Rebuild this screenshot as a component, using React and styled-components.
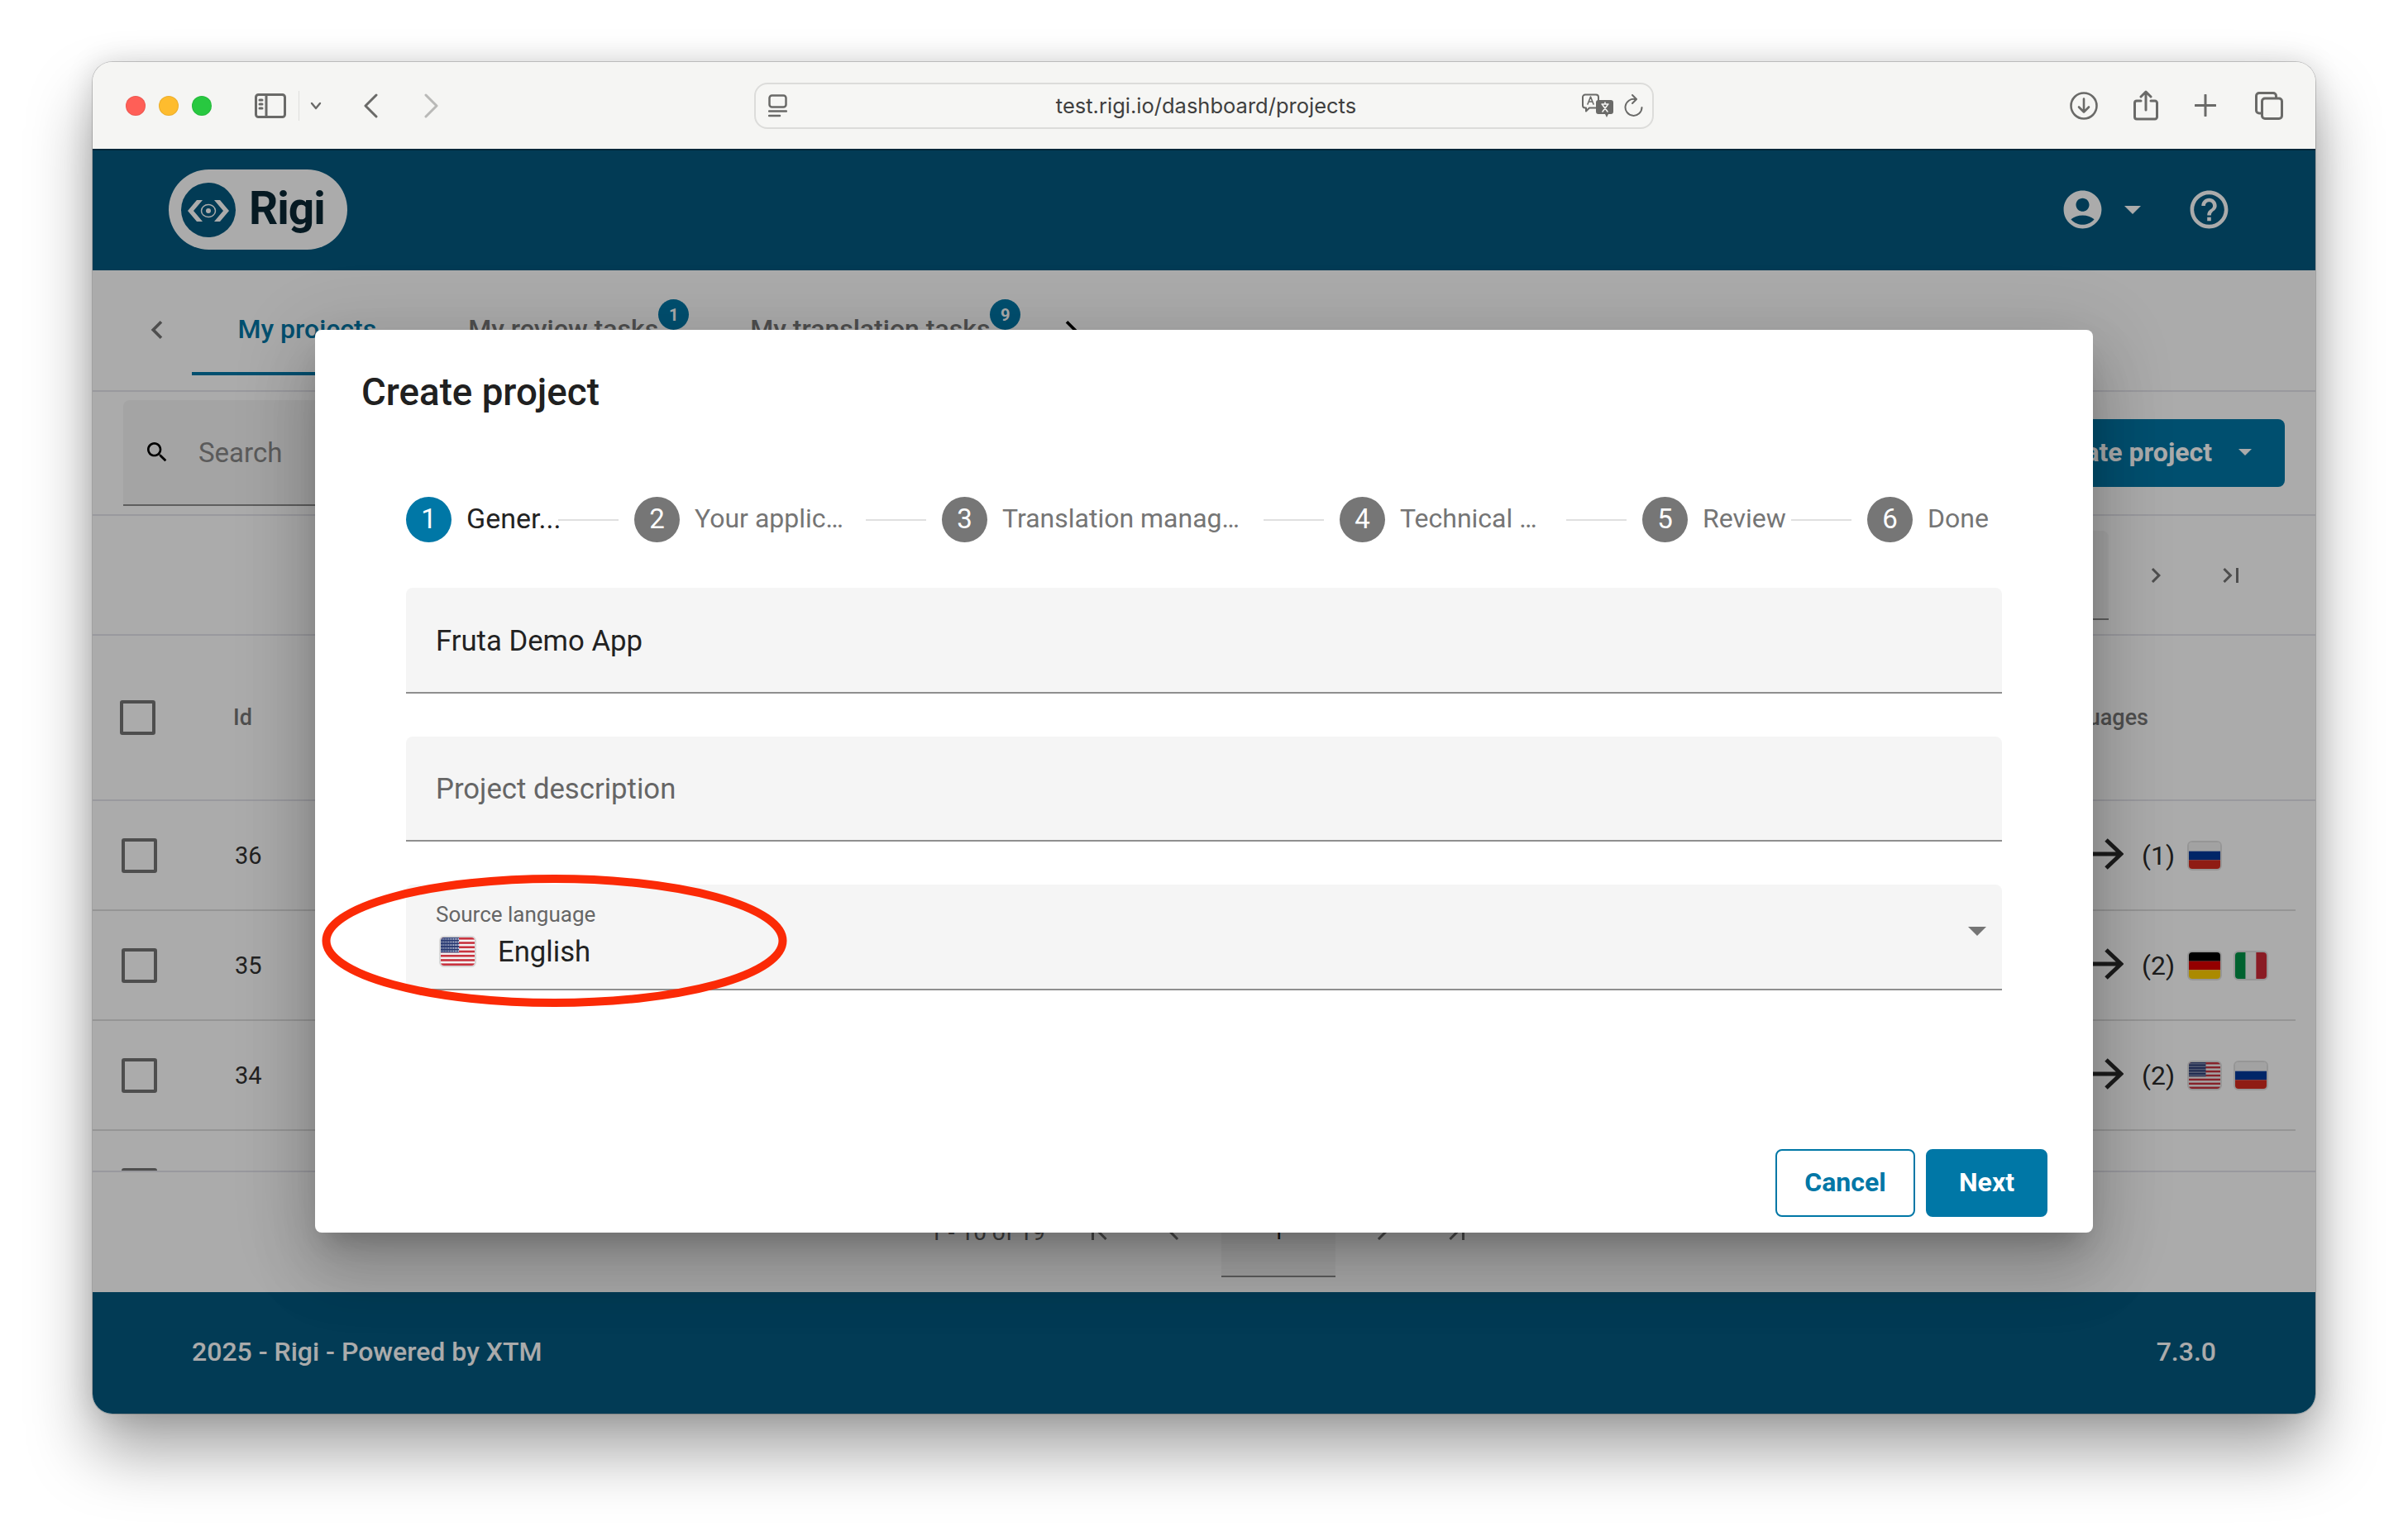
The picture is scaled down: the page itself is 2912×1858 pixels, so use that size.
import React from 'react';
import styled, { createGlobalStyle } from 'styled-components';

const PRIMARY = '#0077a6';

const GlobalStyle = createGlobalStyle`
  * {
    box-sizing: border-box;
  }

  html,
  body {
    margin: 0;
    background: #fff;
    font-family: Roboto, 'Liberation Sans', sans-serif;
  }
`;

const Stage = styled.div`
  width: 2912px;
  height: 1858px;
  padding: 75px 112px 0;
  overflow: hidden;
`;

const BrowserWindow = styled.div`
  width: 2688px;
  height: 1635px;
  display: flex;
  flex-direction: column;
  border-radius: 24px;
  overflow: hidden;
  box-shadow: 0 0 0 1px rgba(0, 0, 0, 0.18), 0 46px 78px rgba(0, 0, 0, 0.36), 0 0 34px rgba(0, 0, 0, 0.14);
`;

/* browser chrome */

const TitleBar = styled.div`
  height: 105px;
  flex: none;
  display: grid;
  grid-template-columns: 800px 1088px 1fr;
  align-items: center;
  background: #f5f5f3;
`;

const ChromeLeft = styled.div`
  display: flex;
  align-items: center;
  padding-left: 40px;
`;

const Light = styled.span`
  width: 24px;
  height: 24px;
  margin-right: 16px;
  border-radius: 50%;
  background: ${(p) => p.$color};
  box-shadow: inset 0 0 0 1px rgba(0, 0, 0, 0.08);
`;

const ChromeIcon = styled.svg`
  display: block;
  flex: none;
  fill: none;
  stroke: ${(p) => p.$stroke || '#6a6a68'};
  stroke-width: ${(p) => p.$weight || 3};
  stroke-linecap: round;
  stroke-linejoin: round;
  margin-left: ${(p) => p.$ml || 0}px;
`;

const ChromeDivider = styled.span`
  width: 1px;
  height: 36px;
  margin-left: 15px;
  background: #dededc;
`;

const UrlBar = styled.div`
  height: 56px;
  display: flex;
  align-items: center;
  padding: 0 11px 0 15px;
  border: 2px solid #dcdcda;
  border-radius: 16px;
  background: #f6f6f4;
`;

const UrlText = styled.span`
  flex: 1;
  padding-left: 52px;
  text-align: center;
  font-family: Inter, Roboto, sans-serif;
  font-size: 25.5px;
  color: #3f3f3f;
`;

const ChromeRight = styled.div`
  display: flex;
  align-items: center;
  justify-content: flex-end;
  padding-right: 39px;
`;

/* app behind the dialog */

const AppArea = styled.div`
  position: relative;
  flex: 1;
  display: flex;
  flex-direction: column;
  background: #fff;
`;

const Backdrop = styled.div`
  position: absolute;
  inset: 0;
  background: rgba(0, 0, 0, 0.33);
`;

const Header = styled.header`
  height: 147px;
  flex: none;
  display: flex;
  align-items: center;
  padding: 0 101px 2px 92px;
  background: #03597f;
  border-top: 2px solid #013a55;
`;

const LogoPill = styled.div`
  width: 216px;
  height: 97px;
  display: flex;
  align-items: center;
  gap: 16px;
  padding-left: 15px;
  border-radius: 49px;
  background: #fff;
`;

const LogoMark = styled.svg`
  width: 66px;
  height: 66px;
  flex: none;
`;

const LogoWord = styled.span`
  margin-top: -3px;
  font-size: 55px;
  font-weight: 700;
  letter-spacing: -1px;
  color: #0a2835;
`;

const HeaderActions = styled.div`
  margin-left: auto;
  display: flex;
  align-items: center;
`;

const MaterialIcon = styled.svg`
  display: block;
  flex: none;
  fill: ${(p) => p.$fill || '#757575'};
  margin-left: ${(p) => p.$ml || 0}px;
`;

const Caret = styled.span`
  width: 0;
  height: 0;
  flex: none;
  border-left: ${(p) => p.$size}px solid transparent;
  border-right: ${(p) => p.$size}px solid transparent;
  border-top: ${(p) => p.$size}px solid ${(p) => p.$color};
  margin-left: ${(p) => p.$ml || 0}px;
`;

const Main = styled.main`
  flex: 1;
  display: flex;
  flex-direction: column;
  min-height: 0;
`;

const TabsRow = styled.div`
  height: 147px;
  flex: none;
  display: flex;
  padding: 14px 0 18px 36px;
  border-bottom: 2px solid #e4e4ec;
`;

const TabScroll = styled.div`
  width: 84px;
  display: flex;
  align-items: center;
  justify-content: center;
  padding-top: 3px;
`;

const Tab = styled.div`
  display: flex;
  align-items: center;
  padding: 5px 55.5px 0;
  font-size: 32px;
  font-weight: 500;
  color: ${(p) => (p.$active ? PRIMARY : '#757575')};
  border-bottom: 4px solid ${(p) => (p.$active ? PRIMARY : 'transparent')};
`;

const TabLabel = styled.span`
  position: relative;
`;

const TabBadge = styled.span`
  position: absolute;
  left: 100%;
  top: -17px;
  width: 37px;
  height: 37px;
  display: flex;
  align-items: center;
  justify-content: center;
  border-radius: 50%;
  background: ${PRIMARY};
  color: #fff;
  font-size: 20px;
  font-weight: 700;
`;

const Toolbar = styled.div`
  height: 150px;
  flex: none;
  display: flex;
  align-items: center;
  justify-content: space-between;
  padding: 0 37px;
  border-bottom: 2px solid #e4e4ec;
`;

const SearchField = styled.div`
  width: 560px;
  height: 128px;
  display: flex;
  align-items: center;
  gap: 34px;
  padding-left: 25px;
  background: #f5f5f5;
  border-bottom: 2px solid #8c8c8c;
  border-radius: 8px 8px 0 0;
  font-size: 33px;
  color: #888;
`;

const CreateButton = styled.div`
  width: 500px;
  height: 82px;
  display: flex;
  align-items: center;
  justify-content: flex-end;
  padding: 0 40px 2px 0;
  border-radius: 8px;
  background: ${PRIMARY};
  color: #fff;
  font-size: 32px;
  font-weight: 700;
`;

const PageRow = styled.div`
  height: 145px;
  flex: none;
  display: flex;
  align-items: center;
  justify-content: ${(p) => (p.$centered ? 'center' : 'flex-end')};
  padding: ${(p) => (p.$centered ? '0 0 0 20px' : '0 57px 0 0')};
  border-bottom: ${(p) => (p.$centered ? 'none' : '2px solid #e4e4ec')};
  font-size: 28px;
  color: #666;
`;

const PageLabel = styled.span`
  margin-right: 20px;
`;

const PageButton = styled.div`
  width: 91px;
  display: flex;
  justify-content: center;
`;

const PageField = styled.div`
  width: 138px;
  height: 108px;
  margin: 0 11px;
  display: flex;
  align-items: center;
  justify-content: center;
  background: #f5f5f5;
  border-bottom: 2px solid #8c8c8c;
  border-radius: 8px 8px 0 0;
  color: #222;
`;

const TableHead = styled.div`
  height: 200px;
  flex: none;
  display: flex;
  align-items: center;
  padding: 0 202px 0 33px;
  border-bottom: 2px solid #e4e4ec;
  font-size: 27px;
  font-weight: 500;
  color: #777;
`;

const HeadId = styled.span`
  margin-left: 94px;
`;

const HeadLanguages = styled.span`
  margin-left: auto;
`;

const TableBody = styled.div`
  height: 449px;
  flex: none;
  overflow: hidden;
  border-bottom: 2px solid #e4e4ec;
`;

const Row = styled.div`
  height: 133px;
  margin-right: 24px;
  display: flex;
  align-items: center;
  justify-content: space-between;
  padding-left: 35px;
  border-bottom: 2px solid #dedede;
`;

const RowLeft = styled.div`
  display: flex;
  align-items: center;
`;

const Checkbox = styled.span`
  display: block;
  width: 43px;
  height: 42px;
  flex: none;
  border: 4px solid #757575;
  border-radius: 3px;
`;

const RowId = styled.span`
  margin-left: 94px;
  font-size: 29px;
  color: #333;
`;

const LanguageCell = styled.div`
  width: 264px;
  display: flex;
  align-items: center;
  color: #2c2c2c;
  font-size: 32px;
`;

const ArrowIcon = styled.svg`
  display: block;
  flex: none;
  fill: none;
  stroke: #2a2a2a;
  stroke-width: 5;
  margin-top: -3px;
`;

const LanguageCount = styled.span`
  width: 38px;
  margin: 0 17px 0 22px;
  white-space: nowrap;
`;

const FlagBox = styled.span`
  display: block;
  flex: none;
  width: ${(p) => p.$w}px;
  height: ${(p) => p.$h}px;
  margin-right: ${(p) => p.$mr || 0}px;
  border: 2px solid rgba(0, 0, 0, 0.12);
  border-radius: 6px;
  overflow: hidden;

  svg {
    display: block;
    width: 100%;
    height: 100%;
  }
`;

const Footer = styled.footer`
  height: 147px;
  flex: none;
  display: flex;
  align-items: center;
  justify-content: space-between;
  padding: 0 120px 3px;
  background: #03597f;
  color: #fff;
  font-size: 32px;
  font-weight: 500;
`;

/* dialog */

const Dialog = styled.section`
  position: absolute;
  left: 269px;
  top: 219px;
  width: 2150px;
  height: 1092px;
  display: flex;
  flex-direction: column;
  padding: 53px 55px 19px 56px;
  border-radius: 8px;
  background: #fff;
  box-shadow: 0 22px 30px -14px rgba(0, 0, 0, 0.2), 0 48px 76px 6px rgba(0, 0, 0, 0.14),
    0 18px 92px 16px rgba(0, 0, 0, 0.12);
`;

const DialogTitle = styled.h2`
  margin: 0;
  padding-top: 1px;
  height: 44px;
  font-size: 45.7px;
  line-height: 44px;
  font-weight: 500;
  color: #202020;
`;

const Stepper = styled.div`
  display: flex;
  align-items: center;
  height: 55px;
  margin: 105px 0 55px 54px;
`;

const StepCircle = styled.span`
  width: 55px;
  height: 55px;
  flex: none;
  display: flex;
  align-items: center;
  justify-content: center;
  padding-bottom: 2px;
  border-radius: 50%;
  background: ${(p) => (p.$active ? PRIMARY : '#767676')};
  color: #fff;
  font-size: 33px;
`;

const StepLabel = styled.span`
  flex: none;
  width: ${(p) => p.$w}px;
  margin-left: 18px;
  padding-bottom: 3px;
  font-size: ${(p) => (p.$active ? 34 : 32)}px;
  white-space: nowrap;
  color: ${(p) => (p.$active ? '#222' : '#757575')};
`;

const StepLine = styled.span`
  width: 73px;
  height: 2px;
  flex: none;
  margin: 0 19px 0 7px;
  background: #e0e0e0;
`;

const Fields = styled.div`
  display: flex;
  flex-direction: column;
  gap: 52px;
  margin: 0 55px 0 54px;
`;

const Field = styled.div`
  position: relative;
  height: 127.5px;
  display: flex;
  flex-direction: column;
  justify-content: center;
  padding: 2px 36px 0;
  background: #f5f5f5;
  border-bottom: 2px solid #8f8f8f;
  border-radius: 8px 8px 0 0;
  font-size: 34.7px;
  color: ${(p) => (p.$placeholder ? '#666' : '#222')};
`;

const SelectField = styled(Field)`
  padding: 0 36px 7px;
`;

const FieldLabel = styled.span`
  font-size: 26px;
  line-height: 36px;
  color: #666;
`;

const FieldValue = styled.div`
  display: flex;
  align-items: center;
  gap: 26px;
  margin-top: 7px;
  line-height: 40px;
  padding-left: 4px;
`;

const SelectCaret = styled.span`
  position: absolute;
  right: 19px;
  top: 51px;
  width: 0;
  height: 0;
  border-left: 11px solid transparent;
  border-right: 11px solid transparent;
  border-top: 11px solid #757575;
`;

const Actions = styled.div`
  margin-top: auto;
  display: flex;
  justify-content: flex-end;
  gap: 13px;
`;

const Button = styled.button`
  height: 82px;
  width: ${(p) => p.$w}px;
  padding: 0 0 3px;
  border: 2px solid ${PRIMARY};
  border-radius: 8px;
  background: ${(p) => (p.$filled ? PRIMARY : '#fff')};
  color: ${(p) => (p.$filled ? '#fff' : PRIMARY)};
  font-family: inherit;
  font-size: 32px;
  font-weight: 700;
`;

const Annotation = styled.svg`
  position: absolute;
  left: 8px;
  top: 659px;
  width: 563px;
  height: 160px;
  fill: none;
  stroke: #fb2a06;
  stroke-width: 10;
`;

const ICONS = {
  chevronLeft: 'M15.41 7.41L14 6l-6 6 6 6 1.41-1.41L10.83 12z',
  chevronRight: 'M10 6L8.59 7.41 13.17 12l-4.58 4.59L10 18l6-6z',
  firstPage: 'M18.41 16.59L13.82 12l4.59-4.59L17 6l-6 6 6 6zM6 6h2v12H6z',
  lastPage: 'M5.59 7.41L10.18 12l-4.59 4.59L7 18l6-6-6-6zM16 6h2v12h-2z',
  search:
    'M15.5 14h-.79l-.28-.27C15.41 12.59 16 11.11 16 9.5 16 5.91 13.09 3 9.5 3S3 5.91 3 9.5 5.91 16 9.5 16c1.61 0 3.09-.59 4.23-1.57l.27.28v.79l5 4.99L20.49 19l-4.99-5zm-6 0C7.01 14 5 11.99 5 9.5S7.01 5 9.5 5 14 7.01 14 9.5 11.99 14 9.5 14z',
  account:
    'M12 2C6.48 2 2 6.48 2 12s4.48 10 10 10 10-4.48 10-10S17.52 2 12 2zm0 4c1.93 0 3.5 1.57 3.5 3.5S13.93 13 12 13s-3.5-1.57-3.5-3.5S10.07 6 12 6zm0 14c-2.03 0-4.43-.82-6.14-2.88C7.55 15.8 9.68 15 12 15s4.45.8 6.14 2.12C16.43 19.18 14.03 20 12 20z',
  help: 'M11 18h2v-2h-2v2zm1-16C6.48 2 2 6.48 2 12s4.48 10 10 10 10-4.48 10-10S17.52 2 12 2zm0 18c-4.41 0-8-3.59-8-8s3.59-8 8-8 8 3.59 8 8-3.59 8-8 8zm0-14c-2.21 0-4 1.79-4 4h2c0-1.1.9-2 2-2s2 .9 2 2c0 2-3 1.75-3 5h2c0-2.25 3-2.5 3-5 0-2.21-1.79-4-4-4z'
};

const Icon = ({ name, size = 36, fill, ml }) => (
  <MaterialIcon width={size} height={size} viewBox="0 0 24 24" $fill={fill} $ml={ml}>
    <path d={ICONS[name]} />
  </MaterialIcon>
);

const Flag = ({ code, w = 42, h = 36, mr }) => (
  <FlagBox $w={w} $h={h} $mr={mr}>
    {code === 'ru' && (
      <svg viewBox="0 0 3 3" preserveAspectRatio="none">
        <rect width="3" height="1" fill="#f2f2f2" />
        <rect y="1" width="3" height="1" fill="#003a9b" />
        <rect y="2" width="3" height="1" fill="#d52b1e" />
      </svg>
    )}
    {code === 'de' && (
      <svg viewBox="0 0 3 3" preserveAspectRatio="none">
        <rect width="3" height="1" fill="#000" />
        <rect y="1" width="3" height="1" fill="#dd0000" />
        <rect y="2" width="3" height="1" fill="#ffce00" />
      </svg>
    )}
    {code === 'it' && (
      <svg viewBox="0 0 3 3" preserveAspectRatio="none">
        <rect width="1" height="3" fill="#009246" />
        <rect x="1" width="1" height="3" fill="#f1f2f1" />
        <rect x="2" width="1" height="3" fill="#ce2b37" />
      </svg>
    )}
    {code === 'us' && (
      <svg viewBox="0 0 26 13" preserveAspectRatio="none">
        <defs>
          <pattern id="us-stars" width="1.3" height="1.4" patternUnits="userSpaceOnUse">
            <circle cx="0.65" cy="0.7" r="0.32" fill="#fff" />
          </pattern>
        </defs>
        <rect width="26" height="13" fill="#f4f4f4" />
        {[0, 2, 4, 6, 8, 10, 12].map((y) => (
          <rect key={y} y={y} width="26" height="1" fill="#c8333f" />
        ))}
        <rect width="14" height="7" fill="#2a3b74" />
        <rect width="14" height="7" fill="url(#us-stars)" />
      </svg>
    )}
  </FlagBox>
);

const SidebarIcon = () => (
  <ChromeIcon width="38" height="30" viewBox="0 0 38 30" $ml={36}>
    <rect x="1.5" y="1.5" width="35" height="27" rx="3" />
    <path d="M14 2v26M6 8h3M6 13h3M6 18h3" />
  </ChromeIcon>
);

const UrlPageIcon = () => (
  <ChromeIcon width="23" height="28" viewBox="0 0 23 28" $weight={2.5}>
    <rect x="1.5" y="1.5" width="20" height="14" rx="3" />
    <path d="M1 20.5h21M1 26h13" />
  </ChromeIcon>
);

const TranslateIcon = () => (
  <ChromeIcon width="39" height="29" viewBox="0 0 39 29" $weight={2}>
    <path d="M4 1.5h13a3 3 0 0 1 3 3v10a3 3 0 0 1-3 3H9l-4 4v-4H4a3 3 0 0 1-3-3v-10a3 3 0 0 1 3-3z" />
    <path d="M7 13l3.5-9 3.5 9M8.2 10h4.6" strokeWidth="1.6" />
    <path
      d="M20 8h15a3 3 0 0 1 3 3v11a3 3 0 0 1-3 3h-3l-2 4-2-4h-8a3 3 0 0 1-3-3V11a3 3 0 0 1 3-3z"
      fill="#6a6a68"
      stroke="none"
    />
    <path d="M24 13h8M28 11v2M25 22l6-8M31 22l-6-8" stroke="#f5f5f3" strokeWidth="1.6" />
  </ChromeIcon>
);

const ReloadIcon = () => (
  <ChromeIcon width="23" height="28" viewBox="0 0 23 28" $ml={12} $weight={2}>
    <path d="M14 6.2A10 10 0 1 0 21.5 16" />
    <path d="M10 1l5 5-5 5" />
  </ChromeIcon>
);

const DownloadIcon = () => (
  <ChromeIcon width="34" height="34" viewBox="0 0 34 34" $weight={2.6}>
    <circle cx="17" cy="17" r="15.5" />
    <path d="M17 8.5v16M11 18.5l6 6 6-6" />
  </ChromeIcon>
);

const ShareIcon = () => (
  <ChromeIcon width="30" height="37" viewBox="0 0 30 37" $ml={43}>
    <path d="M9 13H4a2.5 2.5 0 0 0-2.5 2.5v17A2.5 2.5 0 0 0 4 35h22a2.5 2.5 0 0 0 2.5-2.5v-17A2.5 2.5 0 0 0 26 13h-5" />
    <path d="M15 24V2M9 8l6-6 6 6" />
  </ChromeIcon>
);

const PlusIcon = () => (
  <ChromeIcon width="26" height="27" viewBox="0 0 26 27" $ml={44}>
    <path d="M13 1v25M1 13.5h24" />
  </ChromeIcon>
);

const TabsIcon = () => (
  <ChromeIcon width="34" height="34" viewBox="0 0 34 34" $ml={47}>
    <path d="M7 26H5a3.5 3.5 0 0 1-3.5-3.5V5A3.5 3.5 0 0 1 5 1.5h17A3.5 3.5 0 0 1 25.5 5v2" />
    <rect x="8.5" y="8" width="24" height="24.5" rx="3.5" />
  </ChromeIcon>
);

const STEPS = [
  { label: 'Gener...', width: 104 },
  { label: 'Your applic…', width: 200 },
  { label: 'Translation manag…', width: 309 },
  { label: 'Technical …', width: 194 },
  { label: 'Review', width: 100 },
  { label: 'Done', width: 90 }
];

const ROWS = [
  { id: 36, count: 1, flags: ['ru'] },
  { id: 35, count: 2, flags: ['de', 'it'] },
  { id: 34, count: 2, flags: ['us', 'ru'] }
];

const Pagination = ({ centered }) => (
  <PageRow $centered={centered}>
    <PageLabel>1 - 10 of 19</PageLabel>
    <PageButton>
      <Icon name="firstPage" />
    </PageButton>
    <PageButton>
      <Icon name="chevronLeft" />
    </PageButton>
    <PageField>1</PageField>
    <PageButton>
      <Icon name="chevronRight" />
    </PageButton>
    <PageButton>
      <Icon name="lastPage" />
    </PageButton>
  </PageRow>
);

const App = () => (
  <Stage>
    <GlobalStyle />
    <BrowserWindow>
      <TitleBar>
        <ChromeLeft>
          <Light $color="#ff5f57" />
          <Light $color="#febc2e" />
          <Light $color="#28c840" />
          <SidebarIcon />
          <ChromeDivider />
          <ChromeIcon width="14" height="10" viewBox="0 0 14 10" $ml={13} $weight={2.4}>
            <path d="M2 2l5 6 5-6" />
          </ChromeIcon>
          <ChromeIcon width="19" height="30" viewBox="0 0 19 30" $ml={50}>
            <path d="M16 2L3 15l13 13" />
          </ChromeIcon>
          <ChromeIcon width="19" height="30" viewBox="0 0 19 30" $ml={54} $stroke="#b9b9b7">
            <path d="M3 2l13 13L3 28" />
          </ChromeIcon>
        </ChromeLeft>
        <UrlBar>
          <UrlPageIcon />
          <UrlText>test.rigi.io/dashboard/projects</UrlText>
          <TranslateIcon />
          <ReloadIcon />
        </UrlBar>
        <ChromeRight>
          <DownloadIcon />
          <ShareIcon />
          <PlusIcon />
          <TabsIcon />
        </ChromeRight>
      </TitleBar>

      <AppArea>
        <Header>
          <LogoPill>
            <LogoMark viewBox="0 0 66 66">
              <circle cx="33" cy="33" r="33" fill="#03597f" />
              <path d="M8 34l11-13h7L15 34l11 13h-7zM58 34L47 21h-7l11 13-11 13h7z" fill="#fff" />
              <ellipse cx="33" cy="34" rx="8.5" ry="7.5" fill="none" stroke="#fff" strokeWidth="1.5" />
              <circle cx="33" cy="34" r="3" fill="#fff" />
            </LogoMark>
            <LogoWord>Rigi</LogoWord>
          </LogoPill>
          <HeaderActions>
            <Icon name="account" size={55} fill="#fff" />
            <Caret $size={10} $color="#fff" $ml={23} />
            <Icon name="help" size={55} fill="#fff" ml={55} />
          </HeaderActions>
        </Header>

        <Main>
          <TabsRow>
            <TabScroll>
              <Icon name="chevronLeft" size={44} />
            </TabScroll>
            <Tab $active>
              <TabLabel>My projects</TabLabel>
            </Tab>
            <Tab>
              <TabLabel>
                My review tasks
                <TabBadge>1</TabBadge>
              </TabLabel>
            </Tab>
            <Tab>
              <TabLabel>
                My translation tasks
                <TabBadge>9</TabBadge>
              </TabLabel>
            </Tab>
            <TabScroll>
              <Icon name="chevronRight" size={44} fill="#000" />
            </TabScroll>
          </TabsRow>

          <Toolbar>
            <SearchField>
              <Icon name="search" size={32} fill="#000" />
              Search
            </SearchField>
            <CreateButton>
              Create project
              <Caret $size={8} $color="#fff" $ml={32} />
            </CreateButton>
          </Toolbar>

          <Pagination />

          <TableHead>
            <Checkbox />
            <HeadId>Id</HeadId>
            <HeadLanguages>Target languages</HeadLanguages>
          </TableHead>

          <TableBody>
            {ROWS.map((row) => (
              <Row key={row.id}>
                <RowLeft>
                  <Checkbox />
                  <RowId>{row.id}</RowId>
                </RowLeft>
                <LanguageCell>
                  <ArrowIcon width="56" height="40" viewBox="0 0 56 40">
                    <path d="M0 20h52M35 3l18 17-18 17" />
                  </ArrowIcon>
                  <LanguageCount>({row.count})</LanguageCount>
                  {row.flags.map((code) => (
                    <Flag key={code} code={code} mr={14} />
                  ))}
                </LanguageCell>
              </Row>
            ))}
            <Row>
              <RowLeft>
                <Checkbox />
              </RowLeft>
            </Row>
          </TableBody>

          <Pagination centered />
        </Main>

        <Footer>
          <span>2025 - Rigi - Powered by XTM</span>
          <span>7.3.0</span>
        </Footer>

        <Backdrop />

        <Dialog>
          <DialogTitle>Create project</DialogTitle>
          <Stepper>
            {STEPS.map((step, i) => (
              <React.Fragment key={step.label}>
                <StepCircle $active={i === 0}>{i + 1}</StepCircle>
                <StepLabel $w={step.width} $active={i === 0}>
                  {step.label}
                </StepLabel>
                {i < STEPS.length - 1 && <StepLine />}
              </React.Fragment>
            ))}
          </Stepper>
          <Fields>
            <Field>Fruta Demo App</Field>
            <Field $placeholder>Project description</Field>
            <SelectField>
              <FieldLabel>Source language</FieldLabel>
              <FieldValue>
                <Flag code="us" w={45} h={38} />
                English
              </FieldValue>
              <SelectCaret />
            </SelectField>
          </Fields>
          <Actions>
            <Button $w={169}>Cancel</Button>
            <Button $w={147} $filled>
              Next
            </Button>
          </Actions>
          <Annotation viewBox="0 0 563 160">
            <ellipse cx="281.5" cy="80" rx="276" ry="75" />
          </Annotation>
        </Dialog>
      </AppArea>
    </BrowserWindow>
  </Stage>
);

export default App;
